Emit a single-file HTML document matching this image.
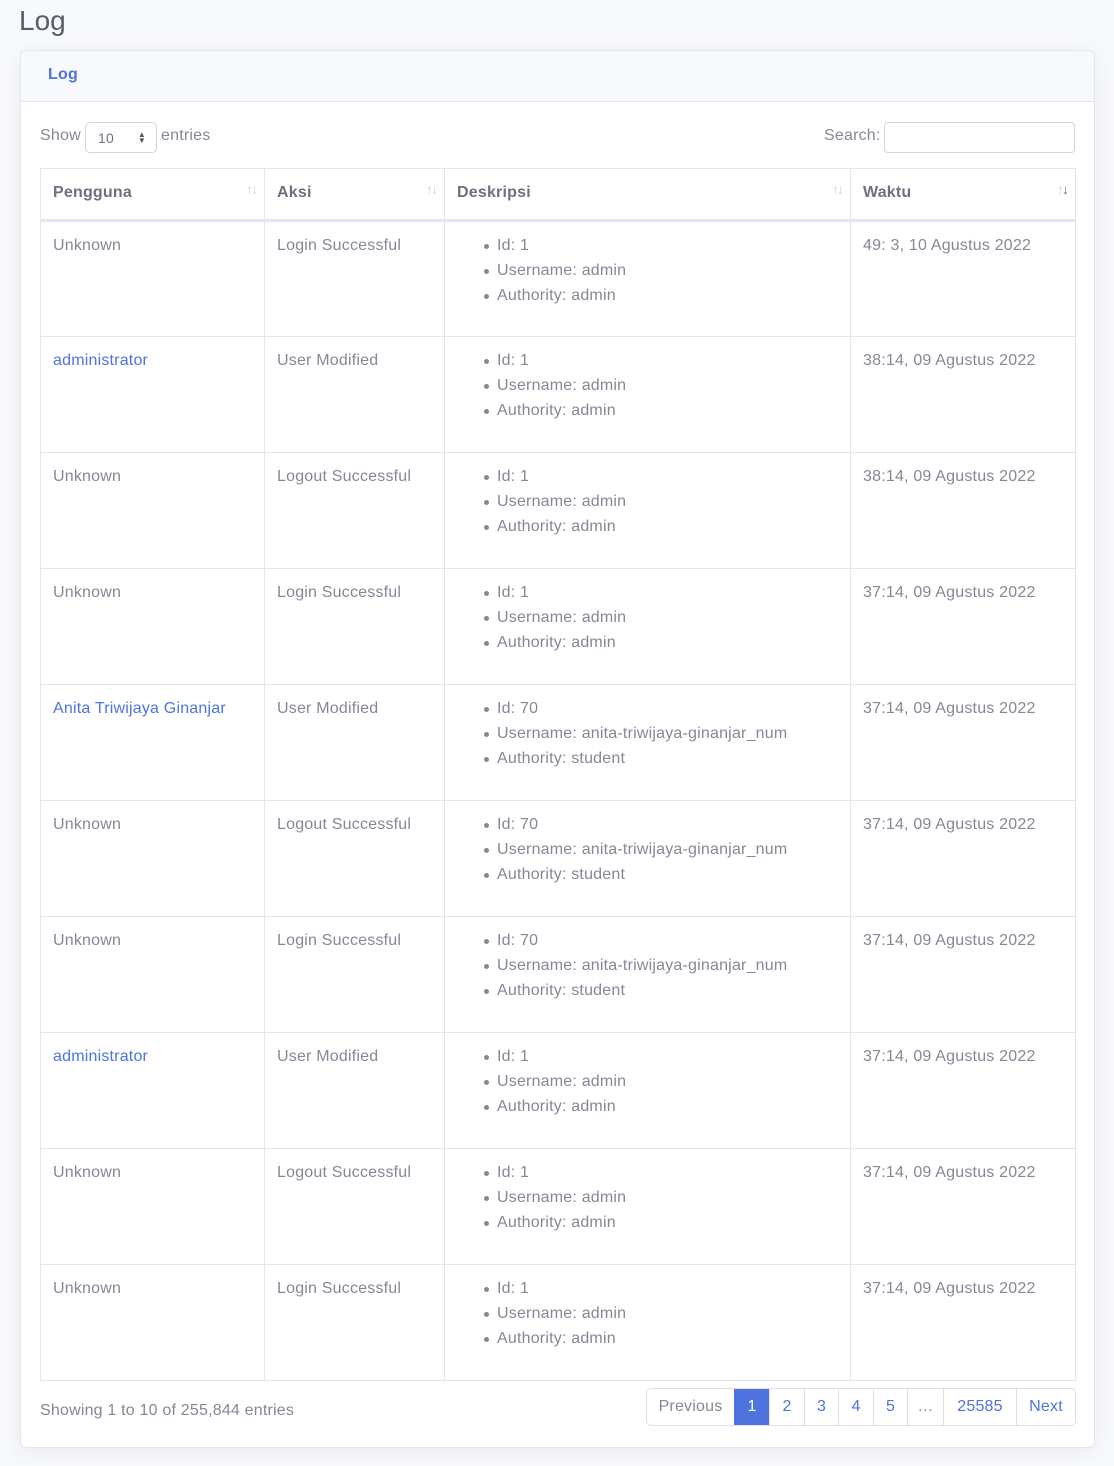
<!DOCTYPE html>
<html><head><meta charset="utf-8"><style>
*{box-sizing:border-box;margin:0;padding:0}
body{width:1114px;height:1466px;background:#f8f9fc;font-family:"Liberation Sans",sans-serif;color:#858796;font-size:16px;letter-spacing:0.2px;position:relative;overflow:hidden}
h1{position:absolute;left:19px;top:5px;font-size:28px;font-weight:400;color:#5a5c69;letter-spacing:0}
.card{position:absolute;left:20px;top:50px;width:1075px;height:1398px;background:#fff;border:1px solid #e3e6f0;border-radius:6px;box-shadow:0 4px 20px rgba(58,59,69,.08)}
.ch{height:51px;background:#f8f9fc;border-bottom:1px solid #e3e6f0;border-radius:6px 6px 0 0;padding:15px 0 0 27px;color:#4e73df;font-weight:700;font-size:16px}
.lab{position:absolute;top:76px;font-size:16px}
.sel{position:absolute;left:64px;top:71px;width:72px;height:31px;border:1px solid #d1d3e2;border-radius:5px;font-size:14px;color:#6e707e;padding:7px 0 0 12px}
.sel i{position:absolute;right:10px;top:9px;font-style:normal;font-size:8px;line-height:6px;color:#555}
.inp{position:absolute;left:863px;top:71px;width:191px;height:31px;border:1px solid #d1d3e2;border-radius:4px}
table{position:absolute;left:19px;top:117px;width:1035px;border-collapse:collapse;table-layout:fixed}
th,td{border:1px solid #e3e6f0;text-align:left;vertical-align:top}
th{height:52px;padding:15px 12px 0;font-weight:700;position:relative;border-bottom:3px solid #e3e6f0;color:#6e707e;font-size:16px}
th b{position:absolute;right:8px;top:12px;font-weight:400;color:#d1d3e2;font-size:14px;letter-spacing:-2px}
td{height:116px;padding:11px 12px 0;line-height:25px}
ul{list-style:none;margin-left:26px}
ul li{line-height:25px;position:relative;padding-left:14px}
ul li:before{content:"";position:absolute;left:1px;top:11px;width:5px;height:5px;border-radius:50%;background:#858796}
a{color:#4e73df;text-decoration:none}
.info{position:absolute;left:19px;top:1351px}
.pg{position:absolute;left:625px;top:1337px;display:flex;height:38px;border:1px solid #dddfeb;border-radius:5px;overflow:hidden}
.pg div{border-left:1px solid #dddfeb;color:#4e73df;line-height:36px;font-size:16px;text-align:center}
.pg div:first-child{border-left:0;color:#858796}
.pg .a{background:#4e73df;color:#fff;border-color:#4e73df}
</style></head><body>
<h1>Log</h1>
<div class="card">
<div class="ch">Log</div>
<div class="lab" style="left:19px">Show</div>
<div class="sel">10<i>▲<br>▼</i></div>
<div class="lab" style="left:140px">entries</div>
<div class="lab" style="left:803px">Search:</div>
<div class="inp"></div>
<table>
<colgroup><col style="width:224px"><col style="width:180px"><col style="width:406px"><col style="width:225px"></colgroup>
<tr><th>Pengguna<b>↑↓</b></th><th>Aksi<b>↑↓</b></th><th>Deskripsi<b>↑↓</b></th><th>Waktu<b>↑<span style="color:#6e707e">↓</span></b></th></tr>
<tr><td>Unknown</td><td>Login Successful</td><td><ul><li>Id: 1</li><li>Username: admin</li><li>Authority: admin</li></ul></td><td>49: 3, 10 Agustus 2022</td></tr>
<tr><td><a>administrator</a></td><td>User Modified</td><td><ul><li>Id: 1</li><li>Username: admin</li><li>Authority: admin</li></ul></td><td>38:14, 09 Agustus 2022</td></tr>
<tr><td>Unknown</td><td>Logout Successful</td><td><ul><li>Id: 1</li><li>Username: admin</li><li>Authority: admin</li></ul></td><td>38:14, 09 Agustus 2022</td></tr>
<tr><td>Unknown</td><td>Login Successful</td><td><ul><li>Id: 1</li><li>Username: admin</li><li>Authority: admin</li></ul></td><td>37:14, 09 Agustus 2022</td></tr>
<tr><td><a>Anita Triwijaya Ginanjar</a></td><td>User Modified</td><td><ul><li>Id: 70</li><li>Username: anita-triwijaya-ginanjar_num</li><li>Authority: student</li></ul></td><td>37:14, 09 Agustus 2022</td></tr>
<tr><td>Unknown</td><td>Logout Successful</td><td><ul><li>Id: 70</li><li>Username: anita-triwijaya-ginanjar_num</li><li>Authority: student</li></ul></td><td>37:14, 09 Agustus 2022</td></tr>
<tr><td>Unknown</td><td>Login Successful</td><td><ul><li>Id: 70</li><li>Username: anita-triwijaya-ginanjar_num</li><li>Authority: student</li></ul></td><td>37:14, 09 Agustus 2022</td></tr>
<tr><td><a>administrator</a></td><td>User Modified</td><td><ul><li>Id: 1</li><li>Username: admin</li><li>Authority: admin</li></ul></td><td>37:14, 09 Agustus 2022</td></tr>
<tr><td>Unknown</td><td>Logout Successful</td><td><ul><li>Id: 1</li><li>Username: admin</li><li>Authority: admin</li></ul></td><td>37:14, 09 Agustus 2022</td></tr>
<tr><td>Unknown</td><td>Login Successful</td><td><ul><li>Id: 1</li><li>Username: admin</li><li>Authority: admin</li></ul></td><td>37:14, 09 Agustus 2022</td></tr>
</table>
<div class="info">Showing 1 to 10 of 255,844 entries</div>
<div class="pg"><div style="width:87px">Previous</div><div class="a" style="width:35px">1</div><div style="width:35px">2</div><div style="width:34px">3</div><div style="width:35px">4</div><div style="width:34px">5</div><div style="width:36px;color:#858796">…</div><div style="width:73px">25585</div><div style="width:59px">Next</div></div>
</div>
</body></html>
